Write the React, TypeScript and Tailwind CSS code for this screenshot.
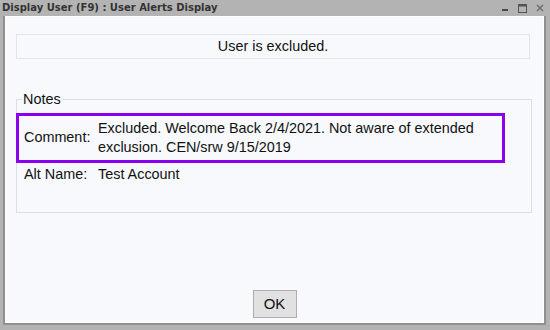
import React from "react";

export default function App() {
  return (
    <div className="w-[550px] h-[330px] bg-[#b3b3b3] flex flex-col overflow-hidden" style={{ fontFamily: '"Liberation Sans", Arial, sans-serif' }}>
      {/* Title bar */}
      <div className="h-[16px] flex items-center justify-between pl-[2px] pr-[6px]">
        <span className="text-[10px] font-bold text-[#333333] leading-none" style={{ fontFamily: '"DejaVu Sans", Verdana, sans-serif' }}>
          Display User (F9) : User Alerts Display
        </span>
        <div className="flex items-center gap-[9px]">
          <svg width="8" height="8" viewBox="0 0 8 8"><rect x="1" y="5" width="6" height="2" fill="#4a4a4a" /></svg>
          <svg width="9" height="9" viewBox="0 0 9 9"><rect x="0.5" y="0.5" width="8" height="8" fill="none" stroke="#555" /><rect x="0.5" y="0.5" width="8" height="2" fill="#555" /></svg>
          <svg width="8" height="8" viewBox="0 0 8 8"><path d="M1 1L7 7M7 1L1 7" stroke="#6a6a6a" strokeWidth="1.4" /></svg>
        </div>
      </div>
      {/* Body frame */}
      <div className="flex-1 flex pl-[3px] pr-[4px] pb-[5px]">
        <div className="flex-1 flex border-l-[2px] border-r-[2px] border-b-[2px] border-[#8f8f8f]">
          <div className="flex-1 bg-[#f7f9fc] border border-[#ffffff] flex flex-col pl-[10px] pt-[17px]">
            <div className="w-[514px] h-[25px] border border-[#e2e4e8] flex items-center justify-center text-[14.4px] text-[#111]">
              User is excluded.
            </div>
            <fieldset className="w-[516px] h-[122px] border border-[#dcdee2] p-0 m-0 mt-[32px]">
              <legend className="ml-[5px] px-[1px] text-[14.4px] text-[#111] leading-[16px]">Notes</legend>
              <div className="mt-[6px] -ml-[1px] w-[489px] h-[50px] border-[3px] border-[#8c00f0] flex items-center text-[14.4px] text-[#111]">
                <div className="w-[79px] pl-[5px]">Comment:</div>
                <div className="flex-1 leading-[19px]">
                  Excluded. Welcome Back 2/4/2021. Not aware of extended exclusion. CEN/srw 9/15/2019
                </div>
              </div>
              <div className="flex items-center h-[23px] text-[14.4px] text-[#111]">
                <div className="w-[81px] pl-[7px]">Alt Name:</div>
                <div>Test Account</div>
              </div>
            </fieldset>
            <div className="flex-1 flex items-end justify-center pb-[4px] pr-[10px]">
              <button className="w-[44px] h-[28px] bg-[#e1e1e1] border border-[#adadad] text-[15px] text-[#111]">OK</button>
            </div>
          </div>
        </div>
      </div>
    </div>
  );
}
